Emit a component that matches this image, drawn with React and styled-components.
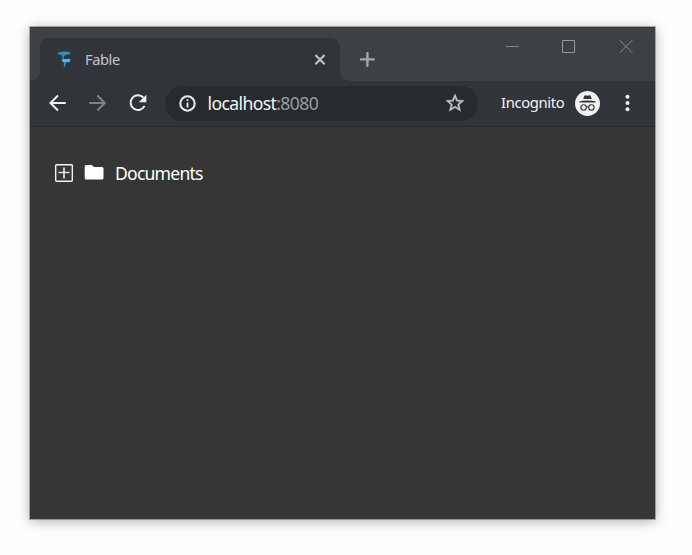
import React from 'react';
import styled, { createGlobalStyle } from 'styled-components';

const GlobalStyle = createGlobalStyle`
  * { box-sizing: border-box; }
  body {
    margin: 0;
    background: #fefefe;
    font-family: "Noto Sans", "Open Sans", sans-serif;
    overflow: hidden;
  }
  svg { display: block; flex: none; }
`;

const Desktop = styled.main`
  height: 555px;
  padding: 27px 37px 36px 30px;
`;

const Window = styled.section`
  width: 625px;
  height: 492px;
  display: flex;
  flex-direction: column;
  background: #363636;
  box-shadow: 0 0 0 1px rgba(70, 70, 70, 0.4), 0 2px 12px rgba(0, 0, 0, 0.34);
`;

const TitleBar = styled.header`
  height: 54px;
  flex: none;
  display: flex;
  align-items: flex-end;
  padding-left: 10px;
  background: #3d4143;
  border-top: 1px solid #35393b;
`;

const Tab = styled.div`
  position: relative;
  width: 300px;
  height: 43px;
  display: flex;
  align-items: center;
  padding: 0 14px 0 15px;
  background: #313439;
  border-radius: 9px 9px 0 0;
  &::before, &::after {
    content: "";
    position: absolute;
    bottom: 0;
    width: 10px;
    height: 10px;
  }
  &::before {
    left: -10px;
    background: radial-gradient(circle at 0 0, transparent 9.5px, #313439 10.2px);
  }
  &::after {
    right: -10px;
    background: radial-gradient(circle at 100% 0, transparent 9.5px, #313439 10.2px);
  }
`;

const TabTitle = styled.span`
  flex: 1;
  margin: 0 0 2px 11px;
  color: #c3c6c9;
  font-size: 14.6px;
  line-height: 20px;
  letter-spacing: -0.38px;
`;

const NewTab = styled.div`
  margin: 0 0 14px 19px;
`;

const WindowControls = styled.div`
  display: flex;
  align-self: flex-start;
  gap: 42px;
  margin: 11px 22px 0 auto;
`;

const Toolbar = styled.nav`
  height: 46px;
  flex: none;
  display: flex;
  align-items: center;
  padding: 0 18px 1px 15px;
  background: #313439;
  border-bottom: 1px solid #28292c;
`;

const NavButtons = styled.div`
  display: flex;
  gap: 16px;
`;

const AddressBar = styled.div`
  width: 313px;
  height: 35px;
  margin-left: 16px;
  padding: 0 12px 0 11px;
  display: flex;
  align-items: center;
  background: #282b2d;
  border-radius: 18px;
`;

const Address = styled.span`
  flex: 1;
  margin-left: 8.6px;
  color: #f4f5f6;
  font-size: 17.6px;
  line-height: 24px;
  letter-spacing: -0.63px;
  white-space: nowrap;
`;

const Port = styled.span`
  color: #979ca0;
`;

const Profile = styled.div`
  display: flex;
  align-items: center;
  margin-left: auto;
`;

const ProfileName = styled.span`
  width: 64px;
  margin: 0 9px 2px 0;
  color: #f4f5f6;
  font-size: 14.8px;
  line-height: 20px;
  letter-spacing: -0.37px;
  white-space: nowrap;
`;

const MenuIcon = styled.svg`
  margin-left: 18px;
`;

const Page = styled.div`
  flex: 1;
  padding: 33px 25px;
`;

const TreeItem = styled.div`
  height: 26px;
  display: flex;
  align-items: center;
`;

const FolderIcon = styled.svg`
  margin-left: 11px;
`;

const ItemName = styled.span`
  margin-left: 11px;
  color: #fff;
  font-size: 17.6px;
  line-height: 26px;
  letter-spacing: -0.8px;
`;

function BackIcon() {
  return (
    <svg width="24" height="24" viewBox="0 0 24 24" fill="none" stroke="#f1f1f1" strokeWidth="2">
      <path d="M20.8 12H5.9M13 4.5 5.5 12l7.5 7.5" />
    </svg>
  );
}

function ForwardIcon() {
  return (
    <svg width="24" height="24" viewBox="0 0 24 24" fill="none" stroke="#808386" strokeWidth="2">
      <path d="M4.3 12h15.2M12.3 4.5l7.5 7.5-7.5 7.5" />
    </svg>
  );
}

export default function App() {
  return (
    <>
      <GlobalStyle />
      <Desktop>
        <Window>
          <TitleBar>
            <Tab>
              <svg width="19" height="20" viewBox="0 0 19 20">
                <path d="M1.6 3.9C4.5 1.2 11 1 15.8 2.2L14.6 4.2 10.4 4.9 8.9 6.4 8.6 9H7.2L7.4 6 5.2 4.6Z" fill="#308cc4" />
                <path d="M7 9 15.6 8.7 14.9 12 11.4 12.6 8.8 18.4 8.9 12.6 6.6 11.2Z" fill="#3491c6" />
                <path d="M7.4 9.4h7.8l-.6 2H7.8Z" fill="#72bddd" />
              </svg>
              <TabTitle>Fable</TabTitle>
              <svg width="12" height="12" viewBox="0 0 12 12" stroke="#c3c6c8" strokeWidth="2">
                <path d="m1.4 1 9.2 9.2m0-9.2-9.2 9.2" />
              </svg>
            </Tab>
            <NewTab>
              <svg width="16" height="16" viewBox="0 0 16 16" stroke="#a5a8aa" strokeWidth="2.4" strokeLinecap="round">
                <path d="M8.4 2.1v12.6M2.1 8.4h12.6" />
              </svg>
            </NewTab>
            <WindowControls>
              <svg width="15" height="15" viewBox="0 0 15 15" stroke="#858789">
                <path d="M2 7.5h13" />
              </svg>
              <svg width="15" height="15" viewBox="0 0 15 15" stroke="#969899" fill="none">
                <path d="M1.5 1.5h12v12h-12z" />
              </svg>
              <svg width="15" height="15" viewBox="0 0 15 15" stroke="#8b8d8f">
                <path d="m1.7 1.2 12.6 12.6m0-12.6L1.7 13.8" />
              </svg>
            </WindowControls>
          </TitleBar>
          <Toolbar>
            <NavButtons>
              <BackIcon />
              <ForwardIcon />
              <svg width="24" height="24" viewBox="0 0 24 24">
                <path d="M18.4 6.5A7.4 7.4 0 1 0 19.6 14.9" fill="none" stroke="#f1f1f1" strokeWidth="2" />
                <path d="M21.3 3.7v7.5h-7.5z" fill="#f1f1f1" />
              </svg>
            </NavButtons>
            <AddressBar>
              <svg width="23" height="23" viewBox="0 0 23 23">
                <circle cx="11.5" cy="11.5" r="7.2" fill="none" stroke="#e8e9ea" strokeWidth="2.1" />
                <path d="M10.6 10.4h1.8v5.1h-1.8zM10.6 7.3h1.8v1.8h-1.8z" fill="#e8e9ea" />
              </svg>
              <Address>localhost<Port>:8080</Port></Address>
              <svg width="22" height="22" viewBox="0 0 24 24">
                <path fill="#c2c5c7" stroke="#c2c5c7" strokeWidth=".4" d="m22 9.24-7.19-.62L12 2 9.19 8.63 2 9.24l5.46 4.73L5.82 21 12 17.27 18.18 21l-1.63-7.03zM12 15.4l-3.76 2.27 1-4.28-3.32-2.88 4.38-.38L12 6.1l1.71 4.04 4.38.38-3.32 2.88 1 4.28z" />
              </svg>
            </AddressBar>
            <Profile>
              <ProfileName>Incognito</ProfileName>
              <svg width="27" height="27" viewBox="0 0 27 27">
                <circle cx="13.5" cy="13.5" r="12.5" fill="#f1f1f1" />
                <path d="M10.3 5.9q.4-1 1.4-.7l1.8.5 1.8-.5q1-.3 1.4.7l1.1 3.2H9.2z" fill="#313439" />
                <path d="M5.3 12.5v-.9q3.2-1 8.2-1t8.2 1v.9z" fill="#313439" />
                <g fill="none" stroke="#313439" strokeWidth="1.1">
                  <circle cx="9.6" cy="17.5" r="2.7" />
                  <circle cx="17.4" cy="17.5" r="2.7" />
                  <path d="M12.2 17.1q1.3-.8 2.6 0" />
                </g>
              </svg>
              <MenuIcon width="18" height="18" viewBox="0 0 18 18" fill="#f1f1f1">
                <circle cx="8.5" cy="2.8" r="2" />
                <circle cx="8.5" cy="9" r="2" />
                <circle cx="8.5" cy="15.2" r="2" />
              </MenuIcon>
            </Profile>
          </Toolbar>
          <Page>
            <TreeItem>
              <svg width="18" height="18" viewBox="0 0 18 18" fill="none">
                <rect x=".7" y=".7" width="16.6" height="16.6" rx=".7" stroke="#f2f2f2" strokeWidth="1.4" />
                <path d="M9 3.5v11M3.5 8.5h11" stroke="#e4e4e4" strokeWidth="1.7" />
              </svg>
              <FolderIcon width="20" height="18" viewBox="0 0 20 18">
                <path d="M2.2 1H7.8L10 3H18q1.5 0 1.5 1.5V14q0 1.5-1.5 1.5H2.2Q.7 15.5.7 14V2.5Q.7 1 2.2 1" fill="#fff" />
              </FolderIcon>
              <ItemName>Documents</ItemName>
            </TreeItem>
          </Page>
        </Window>
      </Desktop>
    </>
  );
}
